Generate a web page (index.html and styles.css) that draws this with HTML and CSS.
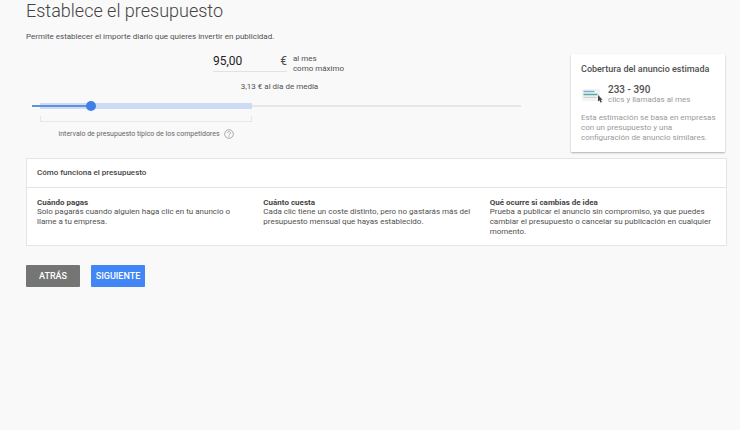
FILE: index.html
```html
<!DOCTYPE html>
<html lang="es">
<head>
<meta charset="utf-8">
<meta name="viewport" content="width=device-width, initial-scale=1">
<title>Establece el presupuesto</title>
<link rel="stylesheet" href="styles.css">
</head>
<body>
<main class="page">
  <h1 class="title">Establece el presupuesto</h1>
  <p class="intro">Permite establecer el importe diario que quieres invertir en publicidad.</p>

  <form class="planner">
    <div class="budget">
      <div class="amount">
        <label class="amount-box">
          <input class="amount-input" type="text" value="95,00" aria-label="Presupuesto mensual">
          <span class="currency">€</span>
        </label>
        <span class="amount-note">al mes<br>como máximo</span>
      </div>
      <p class="average">3,13 € al día de media</p>
      <div class="slider-area">
        <input class="slider" type="range" min="0" max="1000" value="113" aria-label="Importe del presupuesto">
        <div class="typical">
          <div class="bracket"></div>
          <div class="typical-label">
            <span>intervalo de presupuesto típico de los competidores</span>
            <button class="help" type="button" aria-label="Ayuda">
              <svg class="help-icon" viewBox="0 0 10 10" fill="none" stroke="#8a8a8a" stroke-width=".7">
                <circle cx="5" cy="5" r="4.3"/>
                <path d="M3.5 4.1a1.5 1.5 0 1 1 2.4 1.2C5.300 5.700 5 5.900 5 6.500M5 7.200v.7"/>
              </svg>
            </button>
          </div>
        </div>
      </div>
    </div>

    <aside class="card">
      <h2 class="card-title">Cobertura del anuncio estimada</h2>
      <div class="reach">
        <svg class="ad-icon" viewBox="0 0 22 18">
          <rect x="1" y="3" width="18" height="12" fill="#f2f4f4"/>
          <path d="M2.500 5.500h11" stroke="#7fa9dc" stroke-width="1.500"/>
          <path d="M2.500 8.500h14" stroke="#4cae9e" stroke-width="1.500"/>
          <path d="M2.500 11.300h13" stroke="#bfcccb" stroke-width="1"/>
          <path d="M17 9v6.500l1.500-1.300 1.100 2.500 1.300-.6-1.100-2.400h1.900z" fill="#444"/>
        </svg>
        <div>
          <div class="reach-number">233 - 390</div>
          <div class="reach-unit">clics y llamadas al mes</div>
        </div>
      </div>
      <p class="card-note">Esta estimación se basa en empresas con un presupuesto y una configuración de anuncio similares.</p>
    </aside>
  </form>

  <section class="info">
    <h2 class="info-title">Cómo funciona el presupuesto</h2>
    <div class="info-columns">
      <article class="info-item">
        <h3 class="info-heading">Cuándo pagas</h3>
        <p class="info-text">Solo pagarás cuando alguien haga clic en tu anuncio o llame a tu empresa.</p>
      </article>
      <article class="info-item">
        <h3 class="info-heading">Cuánto cuesta</h3>
        <p class="info-text">Cada clic tiene un coste distinto, pero no gastarás más del presupuesto mensual que hayas establecido.</p>
      </article>
      <article class="info-item">
        <h3 class="info-heading">Qué ocurre si cambias de idea</h3>
        <p class="info-text">Prueba a publicar el anuncio sin compromiso, ya que puedes cambiar el presupuesto o cancelar su publicación en cualquier momento.</p>
      </article>
    </div>
  </section>

  <div class="actions">
    <button class="button button-back" type="button">ATRÁS</button>
    <button class="button button-next" type="button">SIGUIENTE</button>
  </div>
</main>
</body>
</html>
```

FILE: styles.css
```css
* {
  box-sizing: border-box;
}

body {
  margin: 0;
  background: #f9f9f9;
  color: #505050;
  font: 8px/10px Roboto, "Liberation Sans", sans-serif;
}

h1, h2, h3, p {
  margin: 0;
}

.page {
  padding: 0 13px 24px 26px;
}

.title {
  color: #444;
  font-size: 18px;
  font-weight: 300;
  line-height: 22px;
}

.intro {
  margin-top: 10px;
}

.planner {
  display: flex;
  align-items: flex-start;
  gap: 50px;
  padding: 12px 2px 6px 6px;
}

.budget {
  flex: 1;
}

.amount {
  display: flex;
  justify-content: center;
  align-items: flex-start;
  gap: 6px;
  margin-left: 4px;
}

.amount-box {
  display: flex;
  align-items: center;
  width: 74px;
  height: 18px;
  padding-bottom: 4px;
  border-bottom: 1px solid #e2e2e2;
}

.amount-input {
  flex: 1;
  min-width: 0;
  padding: 0;
  border: 0;
  background: none;
  color: #222;
  font: 12px/14px Roboto, "Liberation Sans", sans-serif;
}

.currency {
  font-size: 12px;
}

.average {
  margin-top: 8px;
  margin-left: 6px;
  text-align: center;
}

.slider-area {
  margin-top: 8px;
}

.slider {
  display: block;
  width: 100%;
  height: 12px;
  margin: 0;
  appearance: none;
  background:
    linear-gradient(#5b93dd, #5b93dd) 0 50% / 12% 2px no-repeat,
    linear-gradient(90deg, transparent 8px, #cddcf2 8px, #cddcf2 45%, transparent 45%) 0 50% / 100% 6px no-repeat,
    linear-gradient(#e6e6e9, #e6e6e9) 0 50% / 100% 2px no-repeat;
}

.slider::-webkit-slider-thumb {
  appearance: none;
  width: 10px;
  height: 10px;
  border-radius: 50%;
  background: #3f80e8;
}

.typical {
  width: 45%;
  padding-left: 8px;
}

.bracket {
  height: 6px;
  margin-top: 4px;
  border: 1px solid #e6e6e6;
  border-top: 0;
}

.typical-label {
  display: flex;
  justify-content: center;
  align-items: center;
  gap: 4px;
  margin-top: 7px;
  color: #666;
  font-size: 7px;
  white-space: nowrap;
}

.help {
  display: block;
  padding: 0;
  border: 0;
  background: none;
}

.help-icon {
  display: block;
  width: 10px;
  height: 10px;
}

.card {
  width: 154px;
  padding: 10px 7px 9px 10px;
  border-radius: 1px;
  background: #fff;
  box-shadow: 0 1px 2px rgba(0, 0, 0, .3);
}

.card-title {
  font-size: 9px;
  font-weight: 500;
  line-height: 10px;
}

.reach {
  display: flex;
  align-items: center;
  gap: 5px;
  margin-top: 10px;
}

.ad-icon {
  width: 22px;
  height: 18px;
}

.reach-number {
  font-size: 10px;
  font-weight: 500;
  line-height: 11px;
}

.reach-unit {
  color: #9a9a9a;
}

.card-note {
  margin-top: 8px;
  color: #9a9a9a;
}

.info {
  border: 1px solid #e4e4e4;
  background: #fff;
}

.info-title {
  padding: 9px 10px;
  border-bottom: 1px solid #e4e4e4;
  color: #444;
  font-size: 8px;
  font-weight: 500;
  line-height: 10px;
}

.info-columns {
  display: grid;
  grid-template-columns: repeat(3, 1fr);
  padding: 10px 10px 8px;
}

.info-item {
  padding-right: 18px;
}

.info-item:last-child {
  padding-right: 0;
}

.info-heading {
  color: #444;
  font-size: 8px;
  font-weight: 700;
  line-height: 9px;
}

.actions {
  display: flex;
  gap: 11px;
  margin-top: 19px;
}

.button {
  width: 54px;
  height: 22px;
  padding: 0;
  border: 0;
  border-radius: 1px;
  color: #fff;
  font: 500 9px/10px Roboto, "Liberation Sans", sans-serif;
}

.button-back {
  background: #757575;
}

.button-next {
  background: #4285f4;
}
```
